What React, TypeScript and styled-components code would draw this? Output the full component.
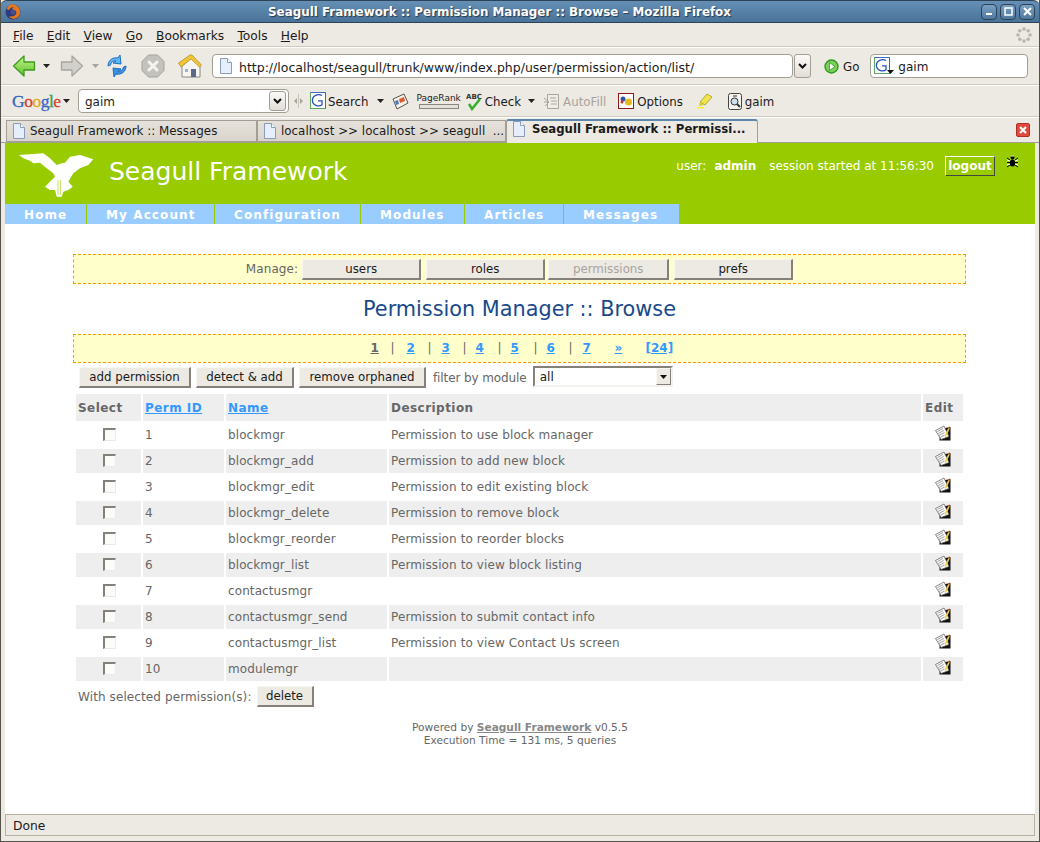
import React from 'react';
import styled, { createGlobalStyle } from 'styled-components';

const GlobalStyle = createGlobalStyle`
  html, body {
    margin: 0;
    padding: 0;
    background: #ede9e3;
    overflow: hidden;
  }
  * { box-sizing: border-box; }
`;

const Window = styled.div`
  width: 1040px;
  height: 842px;
  display: flex;
  flex-direction: column;
  background: #ede9e3;
  font-family: "DejaVu Sans", sans-serif;
  font-size: 12px;
  color: #1a1a1a;
  border-left: 1px solid #55524c;
  border-right: 1px solid #55524c;
  border-bottom: 1px solid #55524c;
  overflow: hidden;
`;

const TitleBar = styled.div`
  height: 23px;
  flex: none;
  margin: 0 -1px;
  display: flex;
  align-items: center;
  padding: 0 5px 0 5px;
  border-radius: 7px 7px 0 0;
  border-top: 1px solid #2c4257;
  border-bottom: 1px solid #2c4257;
  background: linear-gradient(#668fb5, #4a7399);
`;

const TitleText = styled.div`
  flex: 1;
  text-align: center;
  color: #fff;
  font-weight: bold;
  font-size: 11.900px;
  text-shadow: 1px 1px 1px #25384a;
`;

const WinButton = styled.div`
  width: 16px;
  height: 16px;
  margin-left: 3px;
  border: 1px solid #2c4257;
  border-radius: 4px;
  background: linear-gradient(#7ba1c2, #4f789e);
  display: flex;
  align-items: center;
  justify-content: center;
`;

const MenuBar = styled.div`
  height: 24px;
  flex: none;
  display: flex;
  align-items: center;
  padding: 0 7px 0 12px;
  gap: 13.300px;
  border-bottom: 1px solid #cfcbc3;
`;

const MenuItem = styled.span`
  font-size: 12.200px;
  padding-top: 2px;
  u { text-decoration: underline; }
`;

const NavToolbar = styled.div`
  height: 38px;
  flex: none;
  display: flex;
  align-items: center;
  border-top: 1px solid #fff;
  border-bottom: 1px solid #cfcbc3;
  padding-left: 11px;
`;

const GoogleToolbar = styled.div`
  height: 32px;
  flex: none;
  display: flex;
  align-items: center;
  border-top: 1px solid #fff;
  border-bottom: 1px solid #cfcbc3;
  padding-left: 11px;
`;

const Tool = styled.div<{ $ml?: number; $muted?: boolean }>`
  display: flex;
  align-items: center;
  flex: none;
  margin-left: ${(p) => p.$ml ?? 0}px;
  gap: 3px;
  color: ${(p) => (p.$muted ? '#a8a49c' : '#1a1a1a')};
  font-size: 11.800px;
`;

const ToolText = styled.span`
  padding-top: 2px;
`;

const Spacer = styled.div`
  flex: 1;
`;

const FieldBox = styled.div<{ $w: number; $h: number; $ml?: number; $pad?: number; $gap?: number; $fs?: number }>`
  width: ${(p) => p.$w}px;
  height: ${(p) => p.$h}px;
  margin-left: ${(p) => p.$ml ?? 0}px;
  flex: none;
  display: flex;
  align-items: center;
  gap: ${(p) => p.$gap ?? 6}px;
  padding: 0 6px 0 ${(p) => p.$pad ?? 6}px;
  background: #fff;
  border: 1px solid #a39e94;
  border-radius: 4px;
  font-size: ${(p) => p.$fs ?? 12}px;
`;

const DropButton = styled.div<{ $ml?: number; $inset?: boolean }>`
  width: 17px;
  height: ${(p) => (p.$inset ? 20 : 24)}px;
  margin-left: ${(p) => (p.$inset ? 'auto' : `${p.$ml ?? 0}px`)};
  margin-right: ${(p) => (p.$inset ? -4 : 0)}px;
  flex: none;
  display: flex;
  align-items: center;
  justify-content: center;
  border: 1px solid #a39e94;
  border-radius: 3px;
  background: linear-gradient(#fbfaf8, #e2ded7);
`;

const TabStrip = styled.div`
  height: 26px;
  flex: none;
  display: flex;
  align-items: flex-end;
  padding-left: 5px;
  border-top: 1px solid #fff;
  border-bottom: 1px solid #a39e94;
`;

const Tab = styled.div<{ $w: number; $active?: boolean }>`
  width: ${(p) => p.$w}px;
  height: ${(p) => (p.$active ? 24 : 22)}px;
  flex: none;
  display: flex;
  align-items: center;
  gap: ${(p) => (p.$active ? 6 : 4)}px;
  padding: ${(p) => (p.$active ? '0 0 6px 5px' : '0 0 0 5px')};
  font-size: ${(p) => (p.$active ? 11.7 : 11.9)}px;
  font-weight: ${(p) => (p.$active ? 'bold' : 'normal')};
  white-space: nowrap;
  overflow: hidden;
  margin-bottom: ${(p) => (p.$active ? -1 : 0)}px;
  background: ${(p) => (p.$active ? '#ede9e3' : 'linear-gradient(#e6e2db, #d9d5cd)')};
  border: 1px solid #a39e94;
  border-bottom: ${(p) => (p.$active ? 'none' : '1px solid #a39e94')};
  border-top: ${(p) => (p.$active ? '2px solid #5c88ae' : '1px solid #a39e94')};
  border-radius: ${(p) => (p.$active ? '3px 3px 0 0' : '0')};
`;

const TabClose = styled.div`
  margin: 0 9px 1px auto;
  align-self: center;
  display: flex;
`;

const Page = styled.div`
  flex: 1;
  min-height: 0;
  margin: 0 4px;
  background: #fff;
  color: #666;
  font-size: 12px;
  letter-spacing: 0.1px;
  display: flex;
  flex-direction: column;
  align-items: center;
`;

const SiteHeader = styled.div`
  width: 100%;
  height: 81px;
  flex: none;
  background: #99cc00;
  display: flex;
  flex-direction: column;
`;

const HeaderTop = styled.div`
  flex: 1;
  display: flex;
  color: #fff;
`;

const SiteLogo = styled.svg`
  margin: 8px 0 0 13px;
  flex: none;
`;

const SiteName = styled.div`
  margin: 12px 0 0 13px;
  font-size: 25px;
  line-height: 34px;
  letter-spacing: 0;
`;

const UserInfo = styled.div`
  margin-left: auto;
  padding: 13px 17px 0 0;
  display: flex;
  align-items: flex-start;
  font-size: 12px;
  line-height: 20px;
  letter-spacing: 0;
`;

const UserName = styled.b`
  margin: 0 13px 0 8px;
`;

const Logout = styled.a`
  margin-left: 11px;
  width: 50px;
  height: 20px;
  text-align: center;
  font-weight: bold;
  color: #fff;
  line-height: 18px;
  border: 1px solid;
  border-color: #fff #444 #444 #fff;
`;

const BugIcon = styled.svg`
  margin: -1px 0 0 12px;
`;

const NavBar = styled.div`
  display: flex;
  height: 20px;
`;

const NavItem = styled.a<{ $w: number }>`
  width: ${(p) => p.$w}px;
  background: #99ccff;
  color: #fff;
  font-weight: bold;
  font-size: 12px;
  letter-spacing: 1.100px;
  line-height: 22px;
  padding-left: 19px;
  margin-right: 1px;
  white-space: nowrap;
`;

const NoticeBar = styled.div<{ $h: number; $mt: number }>`
  width: 893px;
  height: ${(p) => p.$h}px;
  margin: ${(p) => p.$mt}px 1px 0 0;
  flex: none;
  display: flex;
  align-items: center;
  justify-content: center;
  background: #ffffcc;
  border: 1px dashed #ff9900;
`;

const ManageLabel = styled.span`
  margin-right: 4px;
`;

const Button = styled.button<{ $w?: number; $disabled?: boolean; $ml?: number }>`
  width: ${(p) => (p.$w ? `${p.$w}px` : 'auto')};
  height: 21px;
  margin-left: ${(p) => p.$ml ?? 0}px;
  padding: 0;
  font-family: "DejaVu Sans", sans-serif;
  font-size: 11.800px;
  color: ${(p) => (p.$disabled ? '#a8a49c' : '#1a1a1a')};
  background: #ede9e3;
  border: 2px solid;
  border-top-width: 1px;
  border-left-width: 1px;
  border-color: #f8f7f4 #85817a #85817a #f8f7f4;
  flex: none;
`;

const Heading = styled.h1`
  margin: 12px 1px 0 0;
  height: 37px;
  font-size: 20.800px;
  line-height: 27px;
  font-weight: normal;
  letter-spacing: 0;
  color: #18498a;
  flex: none;
`;

const PagerItem = styled.a<{ $w: number; $current?: boolean; $plain?: boolean }>`
  width: ${(p) => p.$w}px;
  flex: none;
  font-weight: ${(p) => (p.$plain ? 'normal' : 'bold')};
  color: ${(p) => (p.$current || p.$plain ? '#666' : '#3399ff')};
  text-decoration: ${(p) => (p.$plain ? 'none' : 'underline')};
  white-space: nowrap;
  letter-spacing: 0;
`;

const Pager = styled.div`
  display: flex;
  width: 301px;
  margin: -2px 0 0 3px;
`;

const ActionRow = styled.div`
  width: 887px;
  height: 21px;
  margin: 4px 1px 0 0;
  padding-left: 3px;
  flex: none;
  display: flex;
  align-items: center;
`;

const FilterLabel = styled.span`
  margin: 0 6px 0 7px;
  letter-spacing: -0.100px;
`;

const FilterSelect = styled.div`
  width: 140px;
  height: 21px;
  margin-bottom: 2px;
  display: flex;
  align-items: center;
  justify-content: space-between;
  padding: 0 0 0 5px;
  background: #fff;
  border: 2px solid;
  border-color: #85817a #f4f2ee #f4f2ee #85817a;
  color: #1a1a1a;
`;

const SelectArrow = styled.div`
  width: 15px;
  height: 17px;
  display: flex;
  align-items: center;
  justify-content: center;
  background: #ede9e3;
  border: 1px solid;
  border-color: #f8f7f4 #85817a #85817a #f8f7f4;
`;

const Table = styled.table`
  width: 891px;
  margin: 4px 1px 0 0;
  border-collapse: separate;
  border-spacing: 2px;
  table-layout: fixed;
  flex: none;
`;

const HeadCell = styled.th<{ $w?: number }>`
  width: ${(p) => (p.$w ? `${p.$w}px` : 'auto')};
  height: 27px;
  padding: 0 2px;
  text-align: left;
  font-size: 12px;
  font-weight: bold;
  letter-spacing: 0.450px;
  color: #666;
  background: #eeeeee;
  a {
    color: #3399ff;
    text-decoration: underline;
  }
`;

const Row = styled.tr<{ $alt: boolean }>`
  background: ${(p) => (p.$alt ? '#eeeeee' : '#ffffff')};
`;

const Cell = styled.td<{ $center?: boolean }>`
  height: 24px;
  padding: 0 2px;
  text-align: ${(p) => (p.$center ? 'center' : 'left')};
  white-space: nowrap;
`;

const Check = styled.input`
  appearance: none;
  display: block;
  width: 13px;
  height: 13px;
  margin: 0 auto 2px 25px;
  background: #fbfbfa;
  border: 1px solid;
  border-width: 2px 1px 1px 2px;
  border-color: #85817a #ede9e3 #ede9e3 #85817a;
`;

const BulkRow = styled.div`
  width: 887px;
  height: 21px;
  margin: 3px 1px 0 0;
  padding-left: 2px;
  flex: none;
  display: flex;
  align-items: center;
  gap: 5px;
`;

const Footer = styled.div`
  margin-top: 14px;
  text-align: center;
  font-size: 10.600px;
  line-height: 13px;
  letter-spacing: 0;
  a {
    font-weight: bold;
    color: #888;
    text-decoration: underline;
  }
`;

const StatusBar = styled.div`
  height: 27px;
  flex: none;
  padding: 0 4px 5px;
`;

const StatusCell = styled.div`
  height: 22px;
  line-height: 22px;
  padding-left: 7px;
  font-size: 12.300px;
  border: 1px solid #b8b0a0;
`;

const Dropmark = ({ color = '#222' }: { color?: string }) => (
  <svg width="7" height="4" viewBox="0 0 7 4"><path d="M0 0h7L3.500 4z" fill={color} /></svg>
);

const Chevron = () => (
  <svg width="9" height="6" viewBox="0 0 9 6"><path d="M1 1l3.500 3.500L8 1" fill="none" stroke="#111" strokeWidth="2" /></svg>
);

const PageIcon = () => (
  <svg width="14" height="16" viewBox="0 0 14 16" style={{ flex: 'none' }}>
    <path d="M1.500.5h7l4 4v11h-11z" fill="#e6eefb" stroke="#8b9bb8" />
    <path d="M8.500.5v4h4" fill="#fff" stroke="#8b9bb8" />
  </svg>
);

const FirefoxIcon = () => (
  <svg width="16" height="16" viewBox="0 0 16 16" style={{ flex: 'none' }}>
    <circle cx="8" cy="8" r="7.500" fill="#2f3a7a" />
    <path d="M2 4c0 2 1 2 2 2 1-2 3-3 5-3-2 1-2 2-1 3 3 0 4 2 3 4-1 2-4 3-6 2 2 1 0 1-1 0 1 3 6 4 9 1 3-3 3-8-1-11C8-1 4 0 2 4z" fill="#e8761a" />
    <circle cx="8" cy="8" r="2.500" fill="#41548f" />
  </svg>
);

const BackIcon = () => (
  <svg width="24" height="24" viewBox="0 0 24 24">
    <defs><linearGradient id="bk" x1="0" y1="0" x2="0" y2="1"><stop offset="0" stopColor="#c4f58d" /><stop offset="1" stopColor="#5dc12a" /></linearGradient></defs>
    <path d="M1.500 12L12 2v6h10.500v8H12v6z" fill="url(#bk)" stroke="#3e9a1c" strokeWidth="1.300" strokeLinejoin="round" />
  </svg>
);

const ForwardIcon = () => (
  <svg width="24" height="24" viewBox="0 0 24 24">
    <path d="M22.500 12L12 2v6H1.500v8H12v6z" fill="#d2d0cb" stroke="#a8a69f" strokeWidth="1.300" strokeLinejoin="round" />
  </svg>
);

const ReloadIcon = () => (
  <svg width="24" height="24" viewBox="0 0 24 24">
    <path d="M3 12C3 6 8 3 13 4l2-3 1 9-8-1 3-2c-3-.5-5 1-5.500 4z" fill="#5fb5ee" stroke="#1a6ec4" strokeWidth="1" />
    <path d="M21 12c0 6-5 9-10 8l-2 3-1-9 8 1-3 2c3 .5 5-1 5.500-4z" fill="#3d8fe0" stroke="#1a6ec4" strokeWidth="1" />
  </svg>
);

const StopIcon = () => (
  <svg width="24" height="24" viewBox="0 0 24 24">
    <path d="M7.500 1h9L23 7.500v9L16.500 23h-9L1 16.500v-9z" fill="#c4c2bd" stroke="#a3a19b" />
    <path d="M8 8l8 8M16 8l-8 8" stroke="#f5f4f1" strokeWidth="3" strokeLinecap="round" />
  </svg>
);

const HomeIcon = () => (
  <svg width="24" height="24" viewBox="0 0 24 24">
    <path d="M4 12v11h18V12L13 4z" fill="#f6f5f1" stroke="#8a8880" />
    <path d="M0.500 9L12 1h2l9.500 10-2 2-8.500-8-10 8z" fill="#f0c636" stroke="#a98a20" strokeWidth=".7" />
    <rect x="13" y="15" width="5" height="8" fill="#5a6a84" />
    <rect x="7" y="15" width="3" height="3" fill="#9fb2cc" />
  </svg>
);

const GoIcon = () => (
  <svg width="15" height="15" viewBox="0 0 15 15">
    <circle cx="7.500" cy="7.500" r="6.500" fill="#7fd05a" stroke="#2f9a1e" strokeWidth="1.400" />
    <path d="M5.500 3.500l5.500 4-5.500 4z" fill="#fff" stroke="#2f9a1e" strokeWidth=".8" />
  </svg>
);

const GoogleG = ({ size, arrow }: { size: number; arrow?: boolean }) => (
  <svg width={size + (arrow ? 5 : 0)} height={size + 2} viewBox={`0 0 ${size + (arrow ? 5 : 0)} ${size + 2}`} style={{ flex: 'none' }}>
    <rect x=".5" y=".5" width={size - 1} height={size} fill="#fff" stroke="#5fa860" />
    <path d={`M${size - .5} .5v${size}`} stroke="#c04038" />
    <path d={`M.5 .5h${size - 1}`} stroke="#3c6fc8" />
    <path d={`M${size * .75} ${size * .22}C${size * .5} ${size * .1} ${size * .15} ${size * .2} ${size * .15} ${size * .52}S${size * .55} ${size * .95} ${size * .75} ${size * .8}V${size * .55}H${size * .5}`} fill="none" stroke="#2450c0" strokeWidth="1.300" />
    {arrow && <path d={`M${size - 3} ${size - 3}h7l-3.500 4z`} fill="#111" />}
  </svg>
);

const GoogleWord = styled.span`
  width: 48px;
  flex: none;
  white-space: nowrap;
  font-family: "Liberation Serif", serif;
  font-size: 17.500px;
  letter-spacing: -0.500px;
  -webkit-text-stroke: 0.300px currentColor;
  color: #3567c4;
`;

const GLetter = styled.span<{ $c: string }>`
  color: ${(p) => p.$c};
`;

const PageRankBox = styled.div`
  display: flex;
  flex-direction: column;
  align-items: center;
  font-size: 9px;
  line-height: 10px;
  gap: 1px;
  color: #222;
`;

const PageRankBar = styled.div`
  width: 40px;
  height: 5px;
  background: #e4e1da;
  border: 1px solid #8a867e;
`;

const PopupIcon = () => (
  <svg width="17" height="17" viewBox="0 0 17 17">
    <path d="M1 6l11-5 4 9-11 6z" fill="#f7f3e8" stroke="#55524c" />
    <path d="M7 6l5-2 1 4-5 2z" fill="#e05a30" />
    <path d="M3 8l3-1 1 4-3 1z" fill="#4a78c8" />
  </svg>
);

const CheckSpell = () => (
  <svg width="16" height="19" viewBox="0 0 16 19">
    <text x="0" y="7" fontSize="7" fontWeight="bold" fontFamily="DejaVu Sans" fill="#333">ABC</text>
    <path d="M3 12l3 5 8-10" fill="none" stroke="#38b02c" strokeWidth="2.500" />
  </svg>
);

const AutoFillIcon = () => (
  <svg width="17" height="17" viewBox="0 0 17 17">
    <path d="M4.500 1.500h11v14h-11z" fill="#efede8" stroke="#aaa69d" />
    <path d="M1 5l5 4M1 9l5 0M2 13l4-4M7 5h6M8 8h6M8 11h6" stroke="#aaa69d" fill="none" />
  </svg>
);

const OptionsIcon = () => (
  <svg width="16" height="16" viewBox="0 0 16 16">
    <rect x=".5" y=".5" width="15" height="15" fill="#fff" stroke="#8a1a1a" />
    <circle cx="5" cy="6" r="2.500" fill="#2e56a8" />
    <circle cx="10.500" cy="9" r="3.500" fill="#e8b820" />
    <circle cx="4" cy="9" r="1.500" fill="#c03a2a" />
  </svg>
);

const HighlightIcon = () => (
  <svg width="17" height="16" viewBox="0 0 17 16">
    <path d="M4 9l7-8 5 3-7 8z" fill="#f2e44a" stroke="#a69a20" strokeWidth=".8" />
    <path d="M1 14h7v1.500H1z" fill="#f8f020" />
    <path d="M4 9l-1 4 5-1z" fill="#d8cc30" />
  </svg>
);

const StopwatchIcon = () => (
  <svg width="14" height="17" viewBox="0 0 14 17">
    <rect x=".5" y=".5" width="13" height="16" rx="2" fill="#f4f3ef" stroke="#44423e" />
    <circle cx="6.500" cy="8.500" r="3.500" fill="#cfe0ee" stroke="#333" />
    <path d="M9 11l3 3" stroke="#333" strokeWidth="2" />
    <path d="M5 3h4" stroke="#333" />
  </svg>
);

const EditIcon = () => (
  <svg width="16" height="16" viewBox="0 0 16 16" style={{ display: 'block', margin: '0 auto 4px' }}>
    <path d="M5 4L15.500 2v13.500H4.500z" fill="#111" />
    <path d="M.5 5.500L9 1l5 10.500-8 3z" fill="#fbfbfb" stroke="#555" strokeWidth=".7" />
    <path d="M2.500 6.500L8 3.500M3.300 8.500L8.800 5.500M4 10.500L9.500 7.500M5 12.500l4.500-2.500" stroke="#a0a0a0" strokeWidth="1" />
    <path d="M9.500 11L14 1.500l1.300.8-4.300 9.700z" fill="#f2d24a" />
    <path d="M14 1.500l1.300.8-.8 1.700-1.300-.8z" fill="#c8301e" />
  </svg>
);

const Throbber = () => (
  <svg width="16" height="16" viewBox="0 0 16 16">
    {[[8, 2], [12.2, 3.800], [14, 8], [12.2, 12.200], [8, 14], [3.800, 12.200], [2, 8], [3.800, 3.800]].map(([x, y]) => (
      <circle key={`${x}-${y}`} cx={x} cy={y} r="1.800" fill="#b8b5ae" />
    ))}
  </svg>
);

const permissions = [
  { id: 1, name: 'blockmgr', desc: 'Permission to use block manager' },
  { id: 2, name: 'blockmgr_add', desc: 'Permission to add new block' },
  { id: 3, name: 'blockmgr_edit', desc: 'Permission to edit existing block' },
  { id: 4, name: 'blockmgr_delete', desc: 'Permission to remove block' },
  { id: 5, name: 'blockmgr_reorder', desc: 'Permission to reorder blocks' },
  { id: 6, name: 'blockmgr_list', desc: 'Permission to view block listing' },
  { id: 7, name: 'contactusmgr', desc: '' },
  { id: 8, name: 'contactusmgr_send', desc: 'Permission to submit contact info' },
  { id: 9, name: 'contactusmgr_list', desc: 'Permission to view Contact Us screen' },
  { id: 10, name: 'modulemgr', desc: '' },
];

const navItems = [
  { label: 'Home', w: 81 },
  { label: 'My Account', w: 127 },
  { label: 'Configuration', w: 145 },
  { label: 'Modules', w: 103 },
  { label: 'Articles', w: 98 },
  { label: 'Messages', w: 115 },
];

const pages = [
  { t: '1', w: 20, current: true }, { t: '|', w: 16, plain: true },
  { t: '2', w: 21 }, { t: '|', w: 14, plain: true },
  { t: '3', w: 21 }, { t: '|', w: 13, plain: true },
  { t: '4', w: 22 }, { t: '|', w: 13, plain: true },
  { t: '5', w: 23 }, { t: '|', w: 13, plain: true },
  { t: '6', w: 22 }, { t: '|', w: 14, plain: true },
  { t: '7', w: 32 }, { t: '»', w: 31 },
  { t: '[24]', w: 26 },
];

const menus = [
  ['F', 'ile'], ['E', 'dit'], ['V', 'iew'], ['G', 'o'], ['B', 'ookmarks'], ['T', 'ools'], ['H', 'elp'],
];

export default function App() {
  return (
    <Window>
      <GlobalStyle />
      <TitleBar>
        <FirefoxIcon />
        <TitleText>Seagull Framework :: Permission Manager :: Browse – Mozilla Firefox</TitleText>
        <WinButton><svg width="9" height="9"><path d="M1 7h6" stroke="#fff" strokeWidth="2" /></svg></WinButton>
        <WinButton><svg width="9" height="9"><rect x="1" y="1" width="7" height="7" fill="none" stroke="#fff" strokeWidth="1.500" /></svg></WinButton>
        <WinButton><svg width="9" height="9"><path d="M1 1l7 7M8 1l-7 7" stroke="#fff" strokeWidth="2" /></svg></WinButton>
      </TitleBar>

      <MenuBar>
        {menus.map(([first, rest]) => (
          <MenuItem key={first}><u>{first}</u>{rest}</MenuItem>
        ))}
        <Spacer />
        <Throbber />
      </MenuBar>

      <NavToolbar>
        <BackIcon />
        <Tool $ml={7}><Dropmark /></Tool>
        <Tool $ml={10}><ForwardIcon /></Tool>
        <Tool $ml={8}><Dropmark color="#a8a49c" /></Tool>
        <Tool $ml={6}><ReloadIcon /></Tool>
        <Tool $ml={12}><StopIcon /></Tool>
        <Tool $ml={13}><HomeIcon /></Tool>
        <FieldBox $w={581} $h={24} $ml={10} $fs={12.5}>
          <PageIcon />
          <ToolText>http://localhost/seagull/trunk/www/index.php/user/permission/action/list/</ToolText>
        </FieldBox>
        <DropButton $ml={1}><Chevron /></DropButton>
        <Tool $ml={13}><GoIcon /></Tool>
        <Tool $ml={4}><ToolText>Go</ToolText></Tool>
        <FieldBox $w={158} $h={24} $ml={11} $pad={3} $gap={3}>
          <GoogleG size={16} arrow />
          <ToolText>gaim</ToolText>
        </FieldBox>
      </NavToolbar>

      <GoogleToolbar>
        <GoogleWord>
          <GLetter $c="#3567c4">G</GLetter><GLetter $c="#d8402c">o</GLetter><GLetter $c="#e0a818">o</GLetter>
          <GLetter $c="#3567c4">g</GLetter><GLetter $c="#38a048">l</GLetter><GLetter $c="#d8402c">e</GLetter>
        </GoogleWord>
        <Tool $ml={3}><Dropmark /></Tool>
        <FieldBox $w={211} $h={24} $ml={8}>
          <ToolText>gaim</ToolText>
          <DropButton $inset><Chevron /></DropButton>
        </FieldBox>
        <Tool $ml={5}>
          <svg width="9" height="14"><path d="M4.500 0v14" stroke="#c8c4bc" /><path d="M0 7l3-3v6zM9 7L6 4v6z" fill="#a8a49c" /></svg>
        </Tool>
        <Tool $ml={7}><GoogleG size={16} /></Tool>
        <Tool $ml={2}><ToolText>Search</ToolText></Tool>
        <Tool $ml={8}><Dropmark /></Tool>
        <Tool $ml={8}><PopupIcon /></Tool>
        <Tool $ml={8}>
          <PageRankBox>PageRank<PageRankBar /></PageRankBox>
        </Tool>
        <Tool $ml={5}><CheckSpell /><ToolText>Check</ToolText></Tool>
        <Tool $ml={7}><Dropmark /></Tool>
        <Tool $ml={8} $muted><AutoFillIcon /><ToolText>AutoFill</ToolText></Tool>
        <Tool $ml={12}><OptionsIcon /><ToolText>Options</ToolText></Tool>
        <Tool $ml={13}><HighlightIcon /></Tool>
        <Tool $ml={15}><StopwatchIcon /><ToolText>gaim</ToolText></Tool>
      </GoogleToolbar>

      <TabStrip>
        <Tab $w={251}><PageIcon />Seagull Framework :: Messages</Tab>
        <Tab $w={249}><PageIcon />localhost &gt;&gt; localhost &gt;&gt; seagull&nbsp;&nbsp;...</Tab>
        <Tab $w={252} $active><PageIcon />Seagull Framework :: Permissi...</Tab>
        <TabClose>
          <svg width="14" height="14" viewBox="0 0 14 14">
            <rect x=".5" y=".5" width="13" height="13" rx="1.500" fill="#e0483c" stroke="#b03028" />
            <path d="M4 4l6 6M10 4l-6 6" stroke="#fff" strokeWidth="2.200" />
          </svg>
        </TabClose>
      </TabStrip>

      <Page>
        <SiteHeader>
          <HeaderTop>
            <SiteLogo width="78" height="48" viewBox="18 151 78 48">
              <path d="M19 155L43.300 153.300 50 158.300 56.700 165 61.700 163.300 65 162.700 70 156.700 80 155 93.300 159.300 88.300 165 80 168.300 73.300 173.300 68.300 181.700 72.700 186.700 68.300 190 63.300 191.700 61.700 196.700 56.700 196.700 55 190 50 190 45 186.700 50 181.700 55 176.700 53.300 173.300 46.700 168.300 40 162.700 33.300 163.300 30 160.700 23.300 158.300Z" fill="#fff" />
              <path d="M58 180v15M60.500 180v15" stroke="#c3e06a" strokeWidth="1" />
            </SiteLogo>
            <SiteName>Seagull Framework</SiteName>
            <UserInfo>
              user:
              <UserName>admin</UserName>
              session started at 11:56:30
              <Logout>logout</Logout>
              <BugIcon width="11" height="13" viewBox="0 0 11 13">
                <circle cx="5.500" cy="2.500" r="2" fill="#000" />
                <ellipse cx="5.500" cy="8" rx="2.800" ry="3.500" fill="#000" />
                <path d="M0 3l3 2M11 3L8 5M0 7.500h3M11 7.500H8M0 12l3-2M11 12l-3-2" stroke="#000" />
                <path d="M0 5l3 1M11 5L8 6M0 10l3-1M11 10L8 9M4 1h3" stroke="#fff" />
              </BugIcon>
            </UserInfo>
          </HeaderTop>
          <NavBar>
            {navItems.map((item) => (
              <NavItem key={item.label} $w={item.w}>{item.label}</NavItem>
            ))}
          </NavBar>
        </SiteHeader>

        <NoticeBar $h={30} $mt={30}>
          <ManageLabel>Manage:</ManageLabel>
          <Button $w={119}>users</Button>
          <Button $w={119} $ml={5}>roles</Button>
          <Button $w={121} $ml={3} $disabled>permissions</Button>
          <Button $w={119} $ml={5}>prefs</Button>
        </NoticeBar>

        <Heading>Permission Manager :: Browse</Heading>

        <NoticeBar $h={29} $mt={1}>
          <Pager>
            {pages.map((p, i) => (
              <PagerItem key={i} $w={p.w} $current={p.current} $plain={p.plain}>{p.t}</PagerItem>
            ))}
          </Pager>
        </NoticeBar>

        <ActionRow>
          <Button $w={112}>add permission</Button>
          <Button $w={98} $ml={5}>detect &amp; add</Button>
          <Button $w={127} $ml={5}>remove orphaned</Button>
          <FilterLabel>filter by module</FilterLabel>
          <FilterSelect>
            all
            <SelectArrow><Dropmark color="#111" /></SelectArrow>
          </FilterSelect>
        </ActionRow>

        <Table>
          <thead>
            <tr>
              <HeadCell $w={65}>Select</HeadCell>
              <HeadCell $w={81}><a>Perm ID</a></HeadCell>
              <HeadCell $w={161}><a>Name</a></HeadCell>
              <HeadCell>Description</HeadCell>
              <HeadCell $w={40}>Edit</HeadCell>
            </tr>
          </thead>
          <tbody>
            {permissions.map((row, i) => (
              <Row key={row.id} $alt={i % 2 === 1}>
                <Cell><Check type="checkbox" /></Cell>
                <Cell>{row.id}</Cell>
                <Cell>{row.name}</Cell>
                <Cell>{row.desc}</Cell>
                <Cell $center><EditIcon /></Cell>
              </Row>
            ))}
          </tbody>
        </Table>

        <BulkRow>
          With selected permission(s):
          <Button $w={57}>delete</Button>
        </BulkRow>

        <Footer>
          Powered by <a>Seagull Framework</a> v0.5.5<br />
          Execution Time = 131 ms, 5 queries
        </Footer>
      </Page>

      <StatusBar>
        <StatusCell>Done</StatusCell>
      </StatusBar>
    </Window>
  );
}
